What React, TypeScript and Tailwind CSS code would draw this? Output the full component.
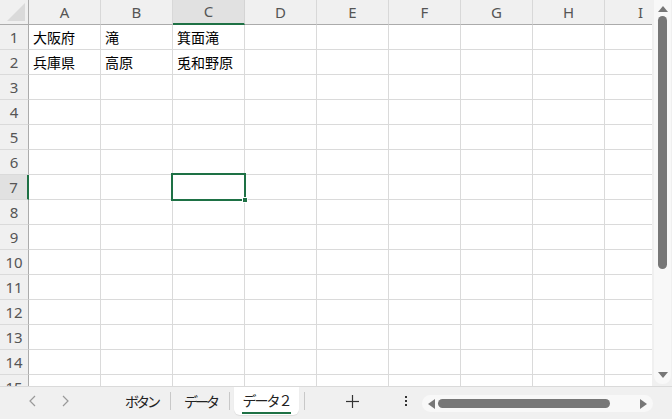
import React from 'react'

const cols = ['A', 'B', 'C', 'D', 'E', 'F', 'G', 'H', 'I']
const rows = Array.from({ length: 15 }, (_, i) => i + 1)

const data: Record<string, string> = {
  A1: '大阪府',
  B1: '滝',
  C1: '箕面滝',
  A2: '兵庫県',
  B2: '高原',
  C2: '兎和野原',
}

const font = { fontFamily: '"Noto Sans", "Noto Sans CJK JP", sans-serif' }

function Corner() {
  return (
    <div className="w-[29px] h-[25px] shrink-0 border-r border-b border-[#ababab] bg-[#f0f0f0] relative">
      <svg width="18" height="18" className="absolute right-[3px] bottom-[3px]">
        <polygon points="18,0 18,18 0,18" fill="#dadada" />
      </svg>
    </div>
  )
}

function HeaderRow() {
  return (
    <div className="flex">
      <Corner />
      {cols.map(c => (
        <div
          key={c}
          className={
            'w-[72px] h-[25px] shrink-0 flex items-center justify-center border-r text-[15px] text-[#555] ' +
            (c === 'C'
              ? 'bg-[#e1e1e1] border-r-[#d4d4d4] border-b-2 border-b-[#1e7145]'
              : 'bg-[#f0f0f0] border-r-[#d8d8d8] border-b border-b-[#ababab]')
          }
        >
          {c}
        </div>
      ))}
    </div>
  )
}

function Row({ n }: { n: number }) {
  const active = n === 7
  return (
    <div className="flex">
      <div
        className={
          'w-[29px] h-[25px] shrink-0 flex items-center justify-center text-[15px] text-[#555] border-b border-b-[#dadada] ' +
          (active ? 'bg-[#e1e1e1] border-r-2 border-r-[#1e7145]' : 'bg-[#f0f0f0] border-r border-r-[#ababab]')
        }
      >
        {n}
      </div>
      {cols.map(c => (
        <div
          key={c}
          className="w-[72px] h-[25px] shrink-0 border-r border-b border-[#dadada] bg-white flex items-center px-[4px] text-[14px] text-black whitespace-nowrap"
        >
          {data[c + n] ?? ''}
        </div>
      ))}
    </div>
  )
}

function VScroll() {
  return (
    <div className="w-[20px] shrink-0 bg-[#f0f0f0] pl-[2px] pr-[1px] pb-[2px]">
      <div className="h-full bg-[#f8f8f8] rounded-b-[8px] flex flex-col items-center">
        <svg width="10" height="8" className="mt-[5px]">
          <polygon points="5,1 10,7 0,7" fill="#777" />
        </svg>
        <div className="w-[9px] h-[253px] mt-[3px] rounded-full bg-[#777]" />
        <div className="flex-1" />
        <svg width="10" height="8" className="mb-[5px]">
          <polygon points="0,1 10,1 5,7" fill="#777" />
        </svg>
      </div>
    </div>
  )
}

function BottomBar() {
  return (
    <div className="h-[33px] bg-[#f0f0f0] border-t border-[#dadada] flex items-start text-[14px] text-[#222] whitespace-nowrap">
      <div className="w-[112px] h-[28px] shrink-0 flex items-center">
        <svg width="8" height="12" className="ml-[29px]">
          <polyline points="6,1 1,6 6,11" fill="none" stroke="#999" strokeWidth="1.2" />
        </svg>
        <svg width="8" height="12" className="ml-[24px]">
          <polyline points="2,1 7,6 2,11" fill="none" stroke="#999" strokeWidth="1.2" />
        </svg>
      </div>
      <div className="h-[28px] shrink-0 flex items-center pl-[13px] pr-[12px] tracking-[-3px]">ボタン</div>
      <div className="w-px h-[18px] mt-[5px] shrink-0 bg-[#c8c8c8]" />
      <div className="h-[28px] shrink-0 flex items-center pl-[13px] pr-[12px] tracking-[-3px]">データ</div>
      <div className="w-px h-[18px] mt-[5px] shrink-0 bg-[#c8c8c8]" />
      <div className="h-[28px] shrink-0 ml-[4px] px-[8px] bg-white rounded-b-[6px] flex flex-col items-center justify-center shadow-[0_1px_1px_rgba(0,0,0,0.08)]">
        <span className="mt-[1px] tracking-[-2px]">データ２</span>
        <div className="w-[49px] h-[2px] bg-[#1e7145] mt-[1px]" />
      </div>
      <div className="w-px h-[18px] mt-[5px] ml-[5px] shrink-0 bg-[#c8c8c8]" />
      <div className="h-[28px] w-[94px] shrink-0 flex items-center justify-center">
        <svg width="13" height="13">
          <line x1="6.5" y1="0" x2="6.5" y2="13" stroke="#333" strokeWidth="1.2" />
          <line x1="0" y1="6.5" x2="13" y2="6.5" stroke="#333" strokeWidth="1.2" />
        </svg>
      </div>
      <div className="h-[28px] w-[14px] shrink-0 flex flex-col items-center justify-center gap-[2px]">
        <div className="w-[2px] h-[2px] bg-[#333]" />
        <div className="w-[2px] h-[2px] bg-[#333]" />
        <div className="w-[2px] h-[2px] bg-[#333]" />
      </div>
      <div className="ml-[9px] mt-[8px] w-[231px] h-[17px] shrink-0 rounded-full bg-[#f8f8f8] flex items-center px-[6px]">
        <svg width="7" height="10">
          <polygon points="7,0 7,10 0,5" fill="#777" />
        </svg>
        <div className="ml-[3px] w-[172px] h-[9px] rounded-full bg-[#777]" />
        <div className="flex-1" />
        <svg width="7" height="10">
          <polygon points="0,0 0,10 7,5" fill="#777" />
        </svg>
      </div>
    </div>
  )
}

export default function App() {
  return (
    <div className="w-[672px] h-[419px] overflow-hidden bg-white flex flex-col" style={font}>
      <div className="flex h-[386px] shrink-0">
        <div className="flex-1 overflow-hidden relative">
          <HeaderRow />
          {rows.map(n => (
            <Row key={n} n={n} />
          ))}
          {/* selection on C7 */}
          <div className="absolute left-[171px] top-[173px] w-[75px] h-[28px] border-2 border-[#1e7145]" />
          <div className="absolute left-[242px] top-[197px] w-[6px] h-[6px] bg-[#1e7145] border border-white" />
        </div>
        <VScroll />
      </div>
      <BottomBar />
    </div>
  )
}
